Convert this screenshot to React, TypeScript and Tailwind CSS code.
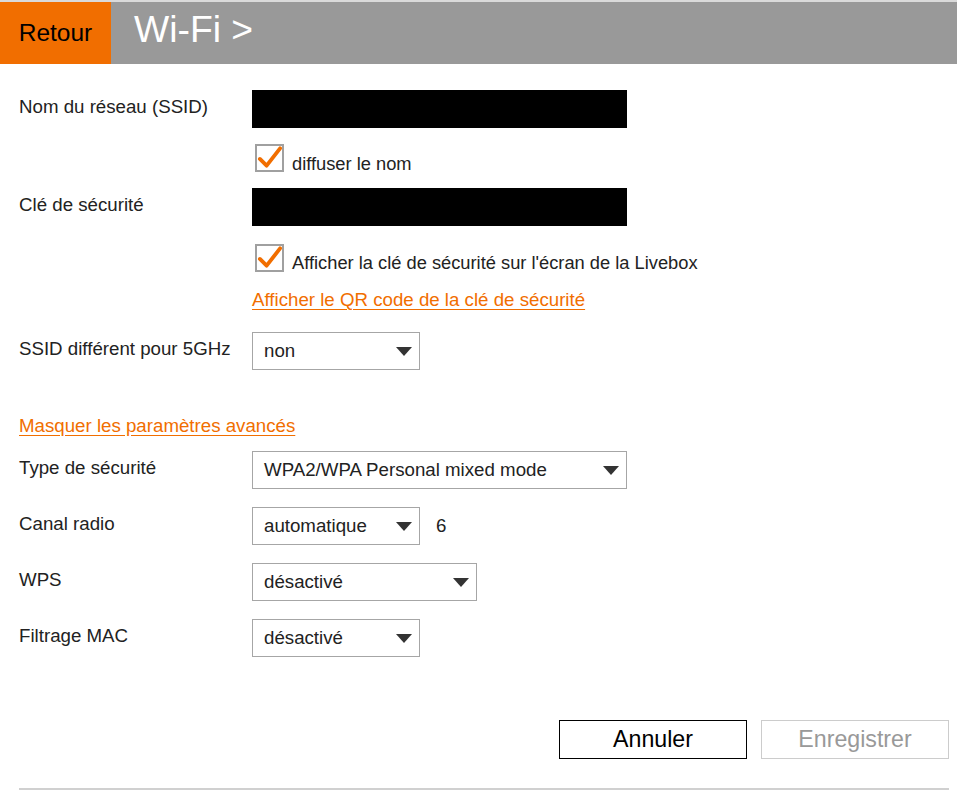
import React from 'react'

const font = { fontFamily: '"Liberation Sans", Arial, sans-serif' }

function Arrow() {
  return (
    <svg width="16" height="9" viewBox="0 0 16 9" className="shrink-0">
      <path d="M0 0 H16 L8 9 Z" fill="#333" />
    </svg>
  )
}

function Select({ value, width }: { value: string; width: string }) {
  return (
    <div
      className={`flex h-[38px] items-center justify-between border border-[#a6a6a6] pl-[11px] pr-[7px] text-[18.7px] text-[#222] ${width}`}
    >
      <span>{value}</span>
      <Arrow />
    </div>
  )
}

function Check({ label, shift }: { label: string; shift: string }) {
  return (
    <div className="flex items-center">
      <div className="flex h-[28px] w-[29px] items-center justify-center border-2 border-[#a0a0a0] bg-white ml-[3px]">
        <svg width="26" height="24" viewBox="0 0 26 24">
          <path
            d="M3 13 L10 20 L24 2"
            fill="none"
            stroke="#f16e00"
            strokeWidth="4"
            strokeLinecap="round"
            strokeLinejoin="round"
          />
        </svg>
      </div>
      <span className={`relative ml-[8px] text-[18.3px] text-[#222] ${shift}`}>{label}</span>
    </div>
  )
}

function Row({
  label,
  children,
  className = '',
}: {
  label?: string
  children: React.ReactNode
  className?: string
}) {
  return (
    <div className={`flex items-center ${className}`}>
      <div className="w-[233px] shrink-0 pb-[4px] text-[18.7px] text-[#222]">{label}</div>
      {children}
    </div>
  )
}

export default function App() {
  return (
    <div className="min-h-[790px] w-[957px] bg-white" style={font}>
      <div className="h-[2px] bg-[#dadada]" />
      <div className="flex h-[62px] bg-[#999999]">
        <div className="flex w-[111px] items-center justify-center bg-[#f16e00] text-[24.5px] text-black">
          Retour
        </div>
        <div className="flex items-center pl-[23px] pb-[6px] text-[37.3px] text-white">Wi-Fi &gt;</div>
      </div>

      <div className="pl-[19px]">
        <Row label="Nom du réseau (SSID)" className="mt-[26px]">
          <div className="h-[38px] w-[375px] bg-black" />
        </Row>
        <Row className="mt-[16px]">
          <Check label="diffuser le nom" shift="top-[6px]" />
        </Row>
        <Row label="Clé de sécurité" className="mt-[16px]">
          <div className="h-[38px] w-[375px] bg-black" />
        </Row>
        <Row className="mt-[18px]">
          <Check label="Afficher la clé de sécurité sur l'écran de la Livebox" shift="top-[5px]" />
        </Row>
        <Row className="mt-[16px]">
          <a className="text-[18.7px] leading-[24px] text-[#f16e00] underline underline-offset-[3px]">
            Afficher le QR code de la clé de sécurité
          </a>
        </Row>
        <Row label="SSID différent pour 5GHz" className="mt-[20px]">
          <Select value="non" width="w-[168px]" />
        </Row>

        <div className="mt-[44px]">
          <a className="text-[18.7px] leading-[24px] text-[#f16e00] underline underline-offset-[3px]">
            Masquer les paramètres avancés
          </a>
        </div>

        <Row label="Type de sécurité" className="mt-[12px]">
          <Select value="WPA2/WPA Personal mixed mode" width="w-[375px]" />
        </Row>
        <Row label="Canal radio" className="mt-[18px]">
          <Select value="automatique" width="w-[168px]" />
          <span className="ml-[16px] text-[18.7px] text-[#222]">6</span>
        </Row>
        <Row label="WPS" className="mt-[18px]">
          <Select value="désactivé" width="w-[225px]" />
        </Row>
        <Row label="Filtrage MAC" className="mt-[18px]">
          <Select value="désactivé" width="w-[168px]" />
        </Row>

        <div className="mt-[63px] flex justify-end gap-[14px] pr-[8px]">
          <button className="h-[39px] w-[188px] border border-black bg-white text-[23.2px] text-black">
            Annuler
          </button>
          <button className="h-[39px] w-[188px] border border-[#cccccc] bg-white text-[23.2px] text-[#999999]">
            Enregistrer
          </button>
        </div>

        <div className="mt-[29px] mr-[8px] h-[2px] bg-[#d0d0d0]" />
      </div>
    </div>
  )
}
